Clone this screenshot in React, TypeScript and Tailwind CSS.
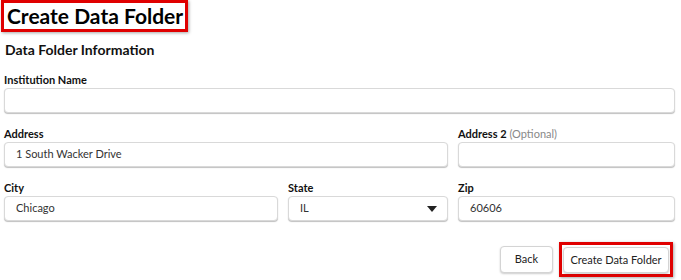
import React from 'react';

const font = { fontFamily: 'Lato, "Open Sans", sans-serif' };

const Field: React.FC<{ label: string; optional?: boolean; value?: string; select?: boolean }> = ({
  label,
  optional,
  value,
  select,
}) => (
  <div className="flex flex-col">
    <label className="text-[11px] font-bold text-[#111] leading-[13px] mb-[2px]">
      {label}
      {optional && <span className="font-normal text-[#888]"> (Optional)</span>}
    </label>
    <div className="h-[25px] bg-white border border-[#d9d9d9] rounded-[4px] shadow-[0_1px_1px_rgba(0,0,0,0.25)] flex items-center px-[11px] text-[11px] text-[#333]">
      <span className="flex-1">{value}</span>
      {select && (
        <svg width="10" height="6" viewBox="0 0 10 6" className="-mr-[1px]">
          <path d="M0 0h10L5 6z" fill="#222" />
        </svg>
      )}
    </div>
  </div>
);

export default function App() {
  return (
    <div className="w-[681px] h-[280px] bg-white overflow-hidden" style={font}>
      <div className="pl-[4px] pr-[6px]">
        <div className="inline-flex items-center border-[3px] border-[#e00000] shadow-[1px_1px_3px_rgba(0,0,0,0.35)] pl-[3px] pr-[2px] h-[32px] -ml-[3px]">
          <h1 className="text-[21px] font-bold leading-[24px] text-black">Create Data Folder</h1>
        </div>
        <h2 className="text-[14px] font-bold text-[#111] mt-[9px] ml-[1px] leading-[17px]">Data Folder Information</h2>

        <div className="mt-[15px] flex flex-col gap-[14px]">
          <Field label="Institution Name" />
          <div className="grid grid-cols-[444px_1fr] gap-[10px]">
            <Field label="Address" value="1 South Wacker Drive" />
            <Field label="Address 2" optional />
          </div>
          <div className="grid grid-cols-[274px_160px_1fr] gap-[10px]">
            <Field label="City" value="Chicago" />
            <Field label="State" value="IL" select />
            <Field label="Zip" value="60606" />
          </div>
        </div>

        <div className="flex justify-end items-center gap-[6px] mt-[21px]">
          <button className="w-[53px] h-[27px] border border-[#d4d4d4] rounded-[4px] shadow-[0_1px_2px_rgba(0,0,0,0.2)] text-[11px] text-[#222] bg-white">
            Back
          </button>
          <div className="border-[3px] border-[#e00000] shadow-[1px_1px_3px_rgba(0,0,0,0.35)] p-[1px] mr-[2px]">
            <button className="w-[106px] h-[26px] border border-[#d4d4d4] rounded-[4px] shadow-[0_1px_2px_rgba(0,0,0,0.2)] text-[11px] text-[#222] bg-white">
              Create Data Folder
            </button>
          </div>
        </div>
      </div>
    </div>
  );
}
